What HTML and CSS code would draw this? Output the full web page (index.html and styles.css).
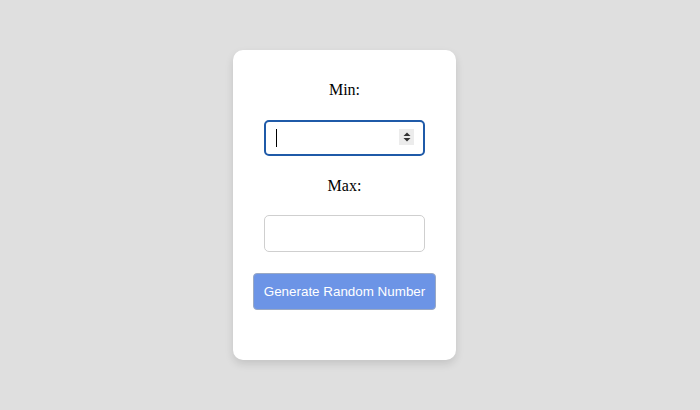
FILE: index.html
```html
<!DOCTYPE html>
<html>
<head>
<meta charset="utf-8">
<link rel="stylesheet" href="styles.css">
</head>
<body>
<div class="stage">
  <div class="card">
    <div class="label">Min:</div>
    <div class="field focused">
      <span class="caret"></span>
      <span class="spinner">
        <svg width="10" height="12" viewBox="0 0 10 12"><path d="M1.5 5 L5 1.5 L8.5 5 Z" fill="#333"/><path d="M1.5 7 L5 10.5 L8.5 7 Z" fill="#333"/></svg>
      </span>
    </div>
    <div class="label max">Max:</div>
    <div class="field"></div>
    <button class="btn">Generate Random Number</button>
  </div>
</div>
</body>
</html>
```
FILE: styles.css
```css
html, body {
  margin: 0;
  padding: 0;
  background: #dfdfdf;
}
.stage {
  width: 700px;
  height: 410px;
  display: flex;
  align-items: flex-start;
  justify-content: flex-start;
  padding: 50px 0 0 233px;
  box-sizing: border-box;
}
.card {
  width: 223px;
  height: 310px;
  box-sizing: border-box;
  background: #fff;
  border-radius: 10px;
  box-shadow: 0 4px 8px rgba(0,0,0,0.12);
  display: flex;
  flex-direction: column;
  align-items: center;
  padding-top: 31px;
}
.label {
  font-family: "Liberation Serif", serif;
  font-size: 16px;
  line-height: 18px;
  color: #000;
  height: 18px;
}
.label.max {
  margin-top: 1px;
}
.field {
  margin-top: 21px;
  margin-bottom: 21px;
  width: 161px;
  height: 37px;
  box-sizing: border-box;
  border: 1px solid #cfcfcf;
  border-radius: 5px;
  background: #fff;
  position: relative;
  display: flex;
  align-items: center;
  padding: 0 10px;
}
.field.focused {
  height: 36px;
  border: 2px solid #1f5aa8;
  border-radius: 5px;
  margin-bottom: 20px;
}
.label.max + .field {
  margin-top: 20px;
}
.caret {
  width: 1px;
  height: 18px;
  background: #000;
}
.spinner {
  position: absolute;
  right: 9px;
  top: 7px;
  width: 15px;
  height: 16px;
  background: #ececec;
  display: flex;
  align-items: center;
  justify-content: center;
}
.btn {
  margin-top: 0;
  width: 183px;
  height: 37px;
  box-sizing: border-box;
  background: #6c94e6;
  color: #fff;
  border: 1px solid #9aa9c4;
  border-radius: 4px;
  font-family: "Liberation Sans", Arial, sans-serif;
  font-size: 13.4px;
  padding: 0;
}
```
